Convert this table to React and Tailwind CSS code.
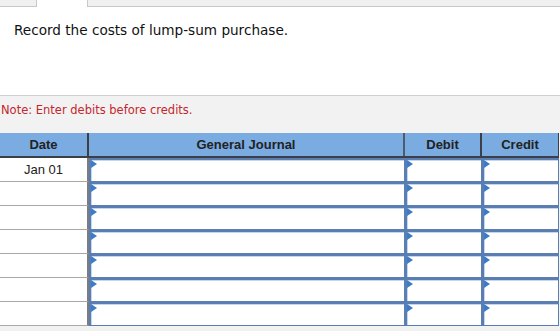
import React from "react";

function Flag() {
  return (
    <svg className="absolute left-0 top-0" width="6" height="8" viewBox="0 0 6 8">
      <polygon points="0,0 6,4 0,8" fill="#3b7bc8" />
    </svg>
  );
}

function InputCell({ w }) {
  return (
    <div
      className={`${w} relative h-full bg-white border-t-2 border-l-2 border-r border-b border-[#5a7eb2] shadow-[inset_1px_1px_0_#c6d6ec]`}
    >
      <Flag />
    </div>
  );
}

export default function App() {
  const rows = ["Jan 01", "", "", "", "", "", ""];
  return (
    <div className="w-[560px] h-[331px] overflow-hidden bg-white">
      {/* tab strip */}
      <div className="flex h-[7px]">
        <div className="w-[37px] bg-[#f0f0f0] border-b border-r border-[#c8c8c8]" />
        <div className="w-[50px] bg-white" />
        <div className="flex-1 bg-[#f0f0f0] border-b border-l border-[#c8c8c8]" />
      </div>
      <div className="h-[88px] pl-[14px] pt-[15px] text-[13.6px] leading-[16px] text-[#111] font-['DejaVu_Sans',sans-serif]">
        Record the costs of lump-sum purchase.
      </div>
      <div className="bg-[#f2f2f2] border-t border-[#cfcfcf] h-[236px]">
        <div className="h-[37px] pl-[1px] pt-[7px] text-[11.5px] leading-[14px] text-[#c4262e] font-['DejaVu_Sans',sans-serif]">
          Note: Enter debits before credits.
        </div>
        <div className="w-[559px] font-['Liberation_Sans',Arial,sans-serif]">
          <div className="flex h-[25px] bg-[#7aabe1] border-b-2 border-r border-[#3a3f48] text-[13px] font-bold text-[#222]">
            <div className="w-[89px] flex items-center justify-center border-r-2 border-[#3a3f48]">Date</div>
            <div className="w-[316px] flex items-center justify-center border-r-2 border-[#4f5a6a]">General Journal</div>
            <div className="w-[77px] flex items-center justify-center border-r-2 border-[#3a3f48]">Debit</div>
            <div className="flex-1 flex items-center justify-center">Credit</div>
          </div>
          {rows.map((d, i) => (
            <div key={i} className="flex h-[24px]">
              <div className="w-[89px] h-full bg-white border-r-2 border-r-[#7c7c7c] border-b border-b-[#a8a8a8] flex items-center justify-center text-[13px] text-[#222]">
                {d}
              </div>
              <InputCell w="w-[316px]" />
              <InputCell w="w-[77px]" />
              <InputCell w="flex-1" />
            </div>
          ))}
        </div>
      </div>
    </div>
  );
}
